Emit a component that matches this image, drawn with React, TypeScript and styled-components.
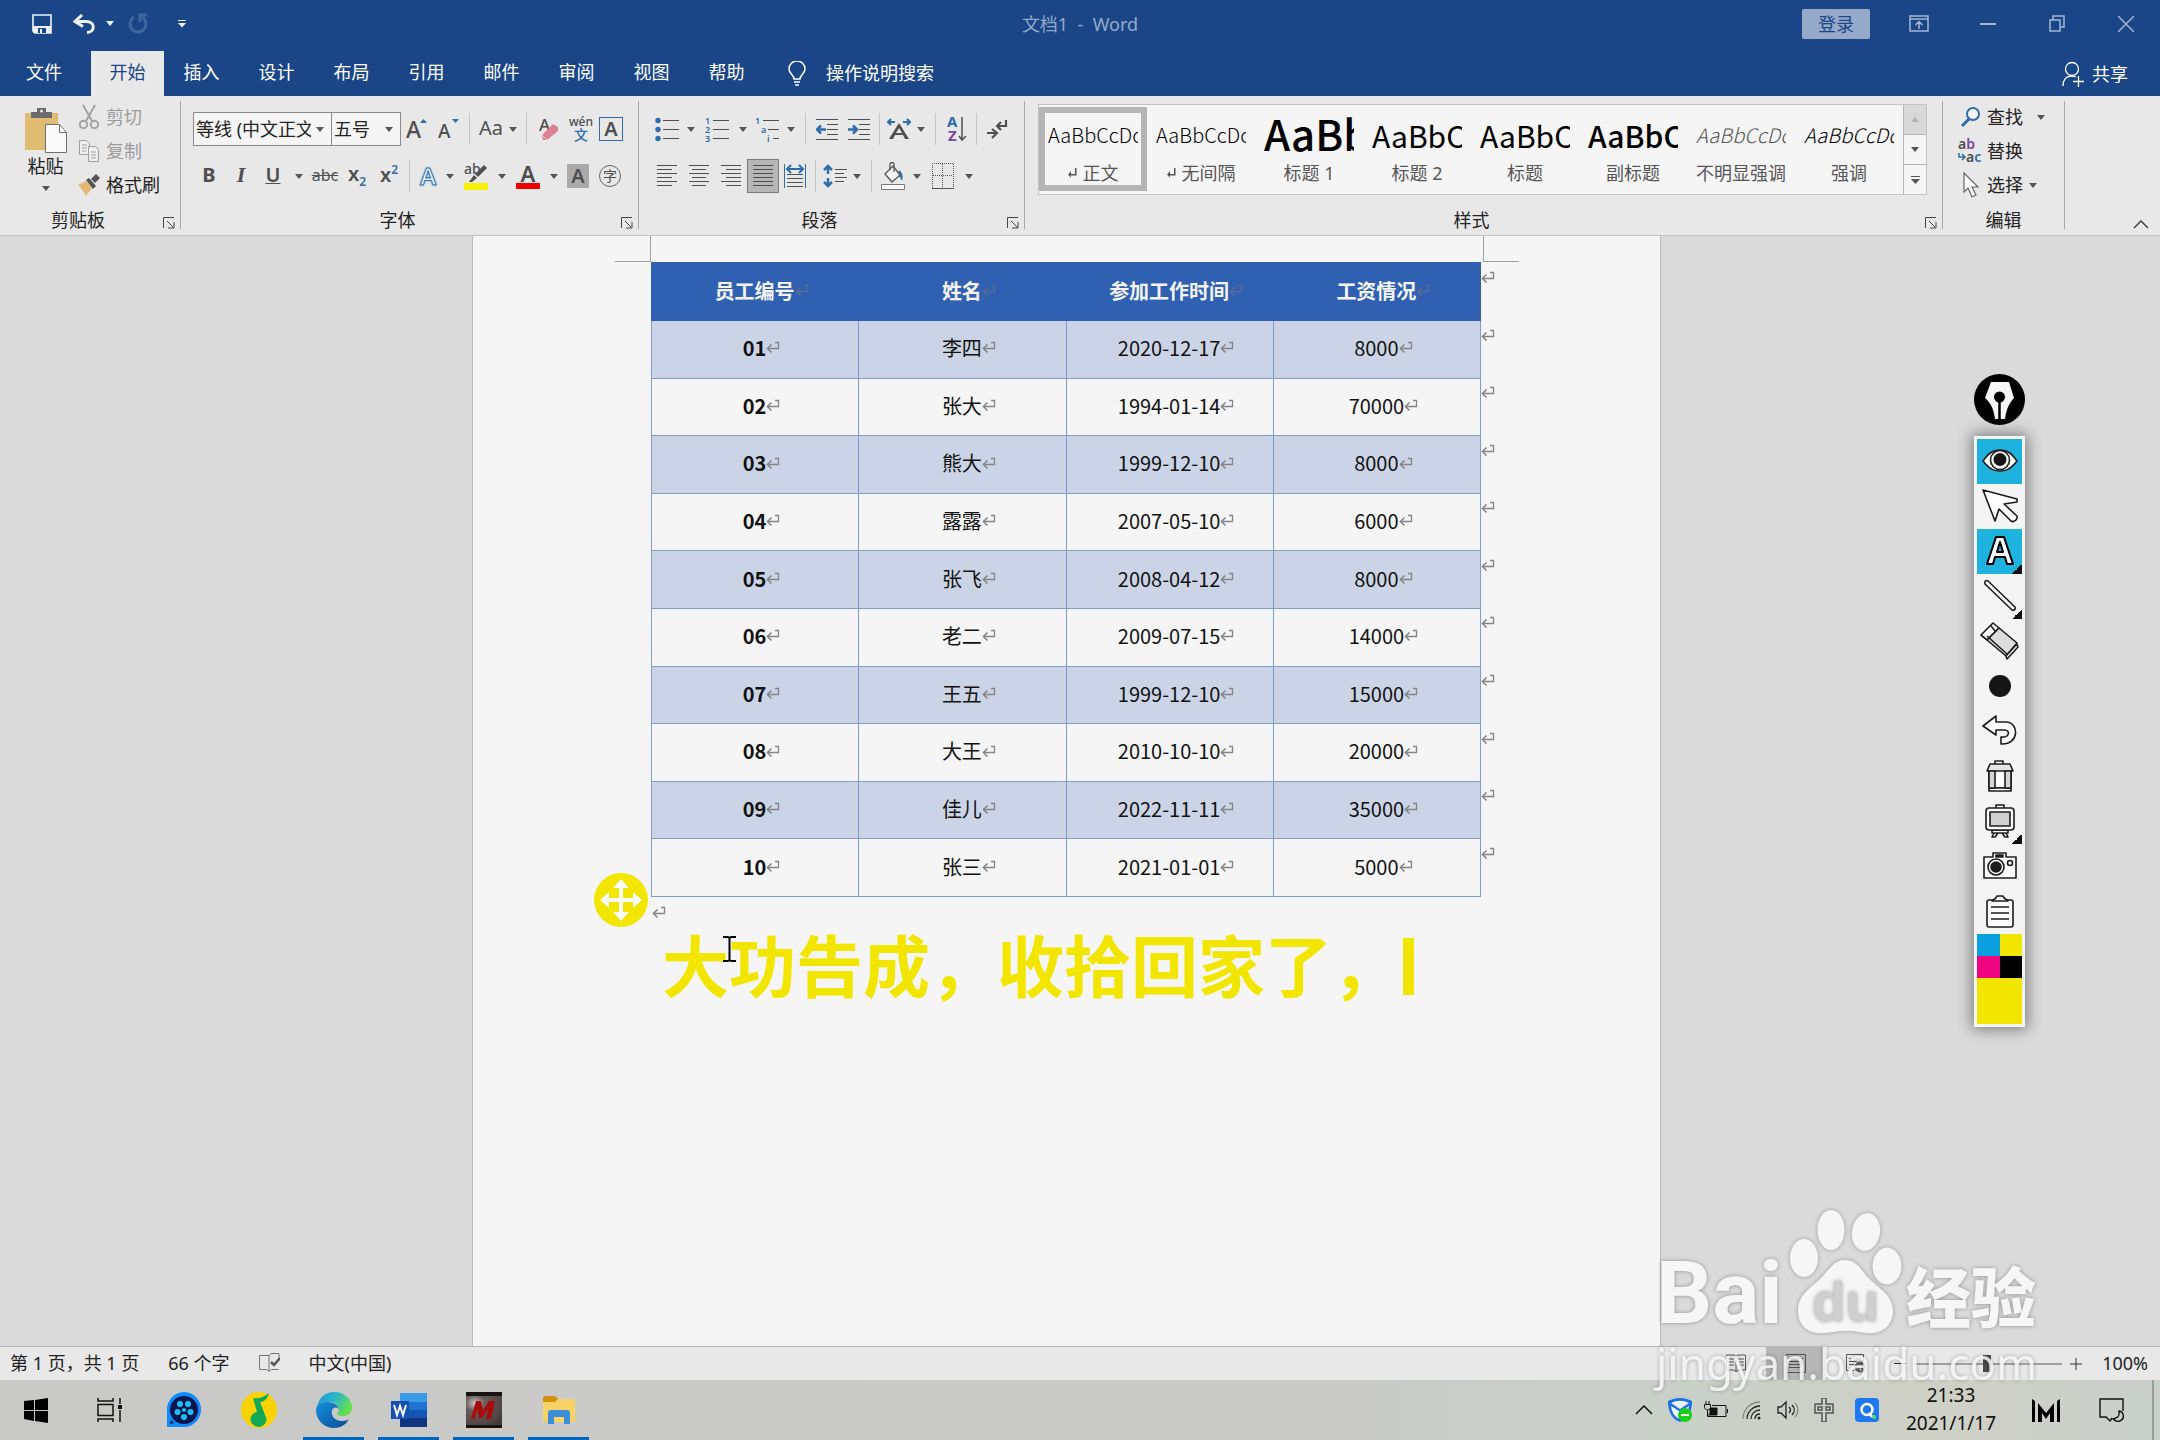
import React from "react";
import styled, { createGlobalStyle, css } from "styled-components";

const ui = `"Noto Sans", "Noto Sans CJK SC", sans-serif`;
const cjk = `"Noto Sans CJK SC", sans-serif`;
const navy = "#1a4688";
const blue = "#2e6cab";
const ink = "#4f4f4f";

const Global = createGlobalStyle`
  *, *::before, *::after { box-sizing: border-box; }
  body { margin: 0; font-family: ${ui}; font-size: 18px; color: #222; background: #dadada; }
  button, input, select { font: inherit; color: inherit; margin: 0; }
  button { border: 0; background: none; padding: 0; white-space: nowrap; }
  svg { display: block; flex: none; }
`;

const Screen = styled.div`
  position: relative;
  display: flex;
  flex-direction: column;
  min-height: 100vh;
  overflow: hidden;
`;

/* ---------- title bar and tabs ---------- */
const TitleBar = styled.header`
  display: grid;
  grid-template-columns: 1fr auto 1fr;
  align-items: center;
  height: 51px;
  padding: 0 0 4px;
  background: ${navy};
  color: #94a9c8;
`;
const QuickBar = styled.div`
  display: flex;
  align-items: center;
  height: 100%;
  padding-left: 22px;
`;
const QuickButton = styled.button<{ $w: number }>`
  display: flex;
  align-items: center;
  justify-content: center;
  width: ${(p) => p.$w}px;
  height: 36px;
`;
const DocTitle = styled.h1`
  margin: 0;
  font-size: 18px;
  font-weight: 400;
  line-height: 24px;
  white-space: pre;
`;
const WindowBar = styled.div`
  display: flex;
  align-items: center;
  justify-content: flex-end;
`;
const SignIn = styled.button`
  width: 68px;
  height: 30px;
  margin-right: 14px;
  border-radius: 2px;
  background: #94aac8;
  color: ${navy};
  line-height: 28px;
`;
const WindowButton = styled.button`
  display: flex;
  align-items: center;
  justify-content: center;
  width: 69px;
  height: 36px;
`;
const TabBar = styled.nav`
  display: flex;
  align-items: stretch;
  height: 45px;
  background: ${navy};
  color: #fff;
`;
const Tab = styled.button<{ $active?: boolean; $file?: boolean }>`
  width: ${(p) => (p.$file ? 91 : p.$active ? 73 : 75)}px;
  padding-right: ${(p) => (p.$file ? 3 : 0)}px;
  line-height: 42px;
  padding-bottom: 3px;
  background: ${(p) => (p.$active ? "#e8e8e8" : "transparent")};
  color: ${(p) => (p.$active ? navy : "#fff")};
`;
const Search = styled.label`
  display: flex;
  align-items: center;
  gap: 20px;
  margin-left: 24px;
  input {
    width: 220px;
    padding: 0 0 2px;
    border: 0;
    background: transparent;
    outline: 0;
  }
  input::placeholder { color: #fff; opacity: 1; }
`;
const Share = styled.button`
  display: flex;
  align-items: center;
  gap: 8px;
  margin-left: auto;
  padding-right: 32px;
  line-height: 24px;
`;

/* ---------- ribbon ---------- */
const Ribbon = styled.section`
  display: flex;
  height: 140px;
  padding: 5px 0 6px;
  background: #e8e8e8;
  border-bottom: 1px solid #c3c3c3;
`;
const Group = styled.div<{ $w: number; $grow?: boolean }>`
  display: flex;
  flex-direction: column;
  width: ${(p) => p.$w}px;
  ${(p) => p.$grow && css`flex: 1 1 auto;`}
  height: 128px;
  border-right: 1px solid #a8a8a8;
`;
const GroupBody = styled.div<{ $pad?: string }>`
  flex: 1;
  min-height: 0;
  padding: ${(p) => p.$pad || "0"};
`;
const GroupFoot = styled.div`
  display: flex;
  align-items: center;
  height: 18px;
  line-height: 20px;
  span { flex: 1; text-align: center; }
`;
const Launcher = styled.button`
  width: 24px;
  height: 18px;
  padding: 6px 0 0 7px;
`;
const ClipBody = styled.div`
  display: flex;
  height: 100%;
`;
const PasteButton = styled.button`
  display: flex;
  flex-direction: column;
  align-items: center;
  width: 77px;
  padding: 6px 0 0 14px;
  line-height: 20px;
  svg + span { margin: 3px 0 10px; }
`;
const Stack = styled.div`
  display: flex;
  flex-direction: column;
`;
const LineButton = styled.button<{ $off?: boolean }>`
  display: flex;
  align-items: center;
  height: 34px;
  padding-bottom: 2px;
  line-height: 24px;
  color: ${(p) => (p.$off ? "#9c9c9c" : "#222")};
  > svg:first-child { width: 24px; margin-right: 5px; }
`;
const ArrowGap = styled.span<{ $wide?: boolean }>`
  margin-left: ${(p) => (p.$wide ? 14 : 6)}px;
`;
const ToolRow = styled.div`
  display: flex;
  align-items: center;
  height: 34px;
  & + & { margin-top: 13px; }
`;
const Tool = styled.button<{ $w?: number; $on?: boolean }>`
  display: flex;
  align-items: center;
  justify-content: center;
  gap: 6px;
  width: ${(p) => p.$w || 32}px;
  height: 34px;
  color: ${ink};
  ${(p) => p.$on && css`background: #b6b6b6; border: 1px solid #7c7c7c;`}
`;
const Sep = styled.i<{ $w: number }>`
  width: 1px;
  height: 32px;
  margin: 0 ${(p) => Math.floor((p.$w - 1) / 2)}px 0 ${(p) => Math.ceil((p.$w - 1) / 2)}px;
  background: #c6c6c6;
`;
const Glyph = styled.span<{ $size?: number; $weight?: number; $italic?: boolean; $line?: string; $serif?: boolean }>`
  margin-bottom: 2px;
  font-family: ${(p) => (p.$serif ? `"Liberation Serif", serif` : ui)};
  font-size: ${(p) => p.$size || 20}px;
  font-weight: ${(p) => p.$weight || 400};
  font-style: ${(p) => (p.$italic ? "italic" : "normal")};
  text-decoration: ${(p) => p.$line || "none"};
  text-decoration-thickness: 1px;
  line-height: 24px;
  sub, sup { font-size: 12px; line-height: 1; color: ${blue}; }
`;
const OutlineA = styled.span`
  font-size: 24px;
  font-weight: 600;
  line-height: 28px;
  color: #eef4fb;
  -webkit-text-stroke: 1px ${blue};
  text-shadow: 0 0 3px #7fb0e6;
`;
const BoxedA = styled.span<{ $filled?: boolean }>`
  width: ${(p) => (p.$filled ? 22 : 24)}px;
  height: 24px;
  font-size: 20px;
  font-weight: 600;
  line-height: 22px;
  border: 1px solid ${(p) => (p.$filled ? "#aaa" : blue)};
  background: ${(p) => (p.$filled ? "#aaa" : "transparent")};
`;
const Circled = styled.span`
  width: 22px;
  height: 22px;
  border: 1px solid #666;
  border-radius: 50%;
  font-size: 14px;
  line-height: 19px;
`;
const Underbar = styled.span<{ $c: string }>`
  display: flex;
  justify-content: center;
  width: 24px;
  height: 26px;
  font-size: 22px;
  font-weight: 600;
  line-height: 20px;
  border-bottom: 6px solid ${(p) => p.$c};
`;
const Pinyin = styled.span`
  display: flex;
  flex-direction: column;
  align-items: center;
  font-size: 12px;
  font-weight: 500;
  line-height: 11px;
  b { font-size: 14px; font-weight: 500; line-height: 15px; color: ${blue}; }
`;
const Combo = styled.span<{ $w: number }>`
  display: grid;
  align-items: center;
  width: ${(p) => p.$w}px;
  height: 34px;
  background: #f5f5f5;
  border: 1px solid #8a8a8a;
  & + & { border-left-width: 0; }
  select {
    grid-area: 1 / 1;
    width: 100%;
    height: 32px;
    padding: 0 20px 0 2px;
    appearance: none;
    border: 0;
    background: transparent;
    outline: 0;
    overflow: hidden;
  }
  svg { grid-area: 1 / 1; justify-self: end; margin-right: 7px; pointer-events: none; }
`;
const Gallery = styled.div`
  display: flex;
  height: 91px;
  background: #f5f5f5;
  border: 1px solid #c3c3c3;
`;
const StyleCard = styled.button<{ $on?: boolean }>`
  display: flex;
  flex-direction: column;
  flex: 1 1 108px;
  min-width: 0;
  height: 84px;
  margin-top: 2px;
  padding: ${(p) => (p.$on ? "0 3px" : "6px 9px")};
  border: ${(p) => (p.$on ? "6px solid #b5b5b5" : "0")};
  color: #555;
`;
const Preview = styled.span<{ $size: number; $bold?: boolean; $italic?: boolean; $soft?: boolean }>`
  width: 100%;
  height: 48px;
  overflow: hidden;
  text-align: left;
  font-family: ${cjk};
  font-size: ${(p) => p.$size}px;
  font-weight: ${(p) => (p.$bold ? 500 : p.$size < 24 ? 300 : 400)};
  font-style: ${(p) => (p.$italic ? "italic" : "normal")};
  line-height: ${(p) => (p.$size > 40 ? 40 : 44)}px;
  color: ${(p) => (p.$soft ? "#555" : "#000")};
`;
const CardName = styled.span`
  display: flex;
  align-items: center;
  justify-content: center;
  gap: 6px;
  width: 100%;
  line-height: 24px;
`;
const GalleryScroll = styled.div`
  display: flex;
  flex-direction: column;
  width: 23px;
  border-left: 1px solid #b5b5b5;
  button {
    display: flex;
    flex: 1;
    align-items: center;
    justify-content: center;
  }
  button + button { border-top: 1px solid #b5b5b5; }
  button:first-child { background: #d8d8d8; }
`;
const RibbonEnd = styled.div`
  display: flex;
  align-items: flex-end;
  justify-content: flex-end;
  width: 95px;
  padding-right: 11px;
`;

/* ---------- document ---------- */
const Workspace = styled.main`
  display: flex;
  flex: 1;
  justify-content: center;
  padding-right: 27px;
  background: #dadada;
`;
const Page = styled.article`
  position: relative;
  width: 1189px;
  background: #f5f5f5;
  border: solid #bcbcbc;
  border-width: 0 1px;
`;
const MarginRow = styled.div`
  display: flex;
  justify-content: space-between;
  height: 26px;
  padding: 0 141px 0 142px;
`;
const Corner = styled.i<{ $right?: boolean }>`
  width: 36px;
  border-bottom: 1px solid #a0a0a0;
  ${(p) => (p.$right ? "border-left" : "border-right")}: 1px solid #a0a0a0;
`;
const Staff = styled.table`
  width: 846px;
  height: 635px;
  margin-left: 178px;
  table-layout: fixed;
  border-collapse: collapse;
  font-family: ${cjk};
  font-size: 20px;
  line-height: 28px;
  color: #111;
  text-align: center;
  col:last-child { width: 16px; }
  th, td { padding: 0 0 2px; border: 1px solid #7f9cc8; }
  thead th { height: 58px; background: #3060b2; color: #f5f5f5; border-color: #3060b2; font-weight: 700; }
  tbody tr:nth-child(odd) > :not(:last-child) { background: #cbd4e6; }
  tbody th { font-weight: 700; }
  th svg, td svg { margin: 0 -13px 6px 0; }
`;
const RowEnd = styled.td`
  && { border: 0; padding: 8px 0 0; vertical-align: top; text-align: left; line-height: 10px; }
`;
const MarkSvg = styled.svg`
  display: inline-block;
  vertical-align: middle;
`;
const Tail = styled.p`
  margin: 0;
  padding: 3px 0 0 179px;
  line-height: 20px;
`;
const Annotation = styled.div`
  position: absolute;
  top: 679px;
  left: 189px;
  display: flex;
  align-items: center;
  font-family: ${cjk};
  font-size: 67px;
  font-weight: 700;
  line-height: 96px;
  color: #f2e600;
  white-space: nowrap;
`;
const Caret = styled.i`
  width: 11px;
  height: 57px;
  margin: 6px 0 0 4px;
  background: #f2e600;
`;
const MoveHandle = styled.button`
  position: absolute;
  top: 637px;
  left: 121px;
`;
const Pointer = styled.svg`
  position: absolute;
  top: 700px;
  left: 249px;
`;

/* ---------- pen palette ---------- */
const Palette = styled.aside`
  position: absolute;
  top: 374px;
  right: 135px;
  display: flex;
  flex-direction: column;
  gap: 11px;
  width: 51px;
`;
const PaletteBox = styled.div`
  display: flex;
  flex-direction: column;
  padding: 3px;
  background: #f4f4f4;
  box-shadow: 0 0 14px 2px rgba(0, 0, 0, 0.45);
`;
const PenTool = styled.button<{ $on?: boolean; $more?: boolean }>`
  display: flex;
  align-items: center;
  justify-content: center;
  height: 45px;
  padding-bottom: 2px;
  background-color: ${(p) => (p.$on ? "#1eb2df" : "transparent")};
  ${(p) =>
    p.$more &&
    css`
      background-image: linear-gradient(135deg, transparent 50%, #111 50%);
      background-size: 10px 10px;
      background-position: right bottom;
      background-repeat: no-repeat;
    `}
`;
const Swatches = styled.div`
  display: grid;
  grid-template-columns: 1fr 1fr;
`;
const Swatch = styled.button<{ $c: string; $wide?: boolean }>`
  grid-column: ${(p) => (p.$wide ? "span 2" : "auto")};
  height: ${(p) => (p.$wide ? 46 : 22)}px;
  background: ${(p) => p.$c};
`;

/* ---------- status bar ---------- */
const StatusBar = styled.footer`
  display: flex;
  align-items: center;
  height: 34px;
  padding: 0 12px 0 10px;
  background: #e8e8e8;
  border-top: 1px solid #b8b8b8;
  line-height: 32px;
  white-space: pre;
`;
const StatusLeft = styled.div`
  display: flex;
  align-items: center;
  gap: 29px;
  padding-bottom: 2px;
`;
const StatusRight = styled.div`
  display: flex;
  align-items: center;
  height: 100%;
  margin-left: auto;
`;
const ViewButton = styled.button<{ $on?: boolean }>`
  display: flex;
  align-items: center;
  justify-content: center;
  width: 60px;
  height: 33px;
  background: ${(p) => (p.$on ? "#b6b6b6" : "transparent")};
`;
const Step = styled.button`
  display: flex;
  align-items: center;
  justify-content: center;
  width: 28px;
  height: 33px;
`;
const Zoom = styled.input`
  width: 148px;
  height: 18px;
  appearance: none;
  background: linear-gradient(#a0a0a0, #a0a0a0) center / 100% 2px no-repeat;
  &::-webkit-slider-thumb { appearance: none; width: 8px; height: 17px; background: #4a4a4a; }
`;
const Percent = styled.span`
  margin-left: 12px;
  padding-bottom: 2px;
`;

/* ---------- task bar ---------- */
const TaskBar = styled.footer`
  display: flex;
  align-items: center;
  height: 60px;
  padding-right: 6px;
  background: linear-gradient(90deg, #c9c9c8 0%, #cacac8 60%, #c9d0c8 78%, #cfd0c6 90%, #c9cfcb 100%);
  color: #111;
`;
const TaskButton = styled.button<{ $w?: number; $open?: boolean }>`
  display: flex;
  align-items: center;
  justify-content: center;
  width: ${(p) => p.$w || 75}px;
  height: 60px;
  ${(p) => p.$open && css`background: linear-gradient(#0067c0, #0067c0) center bottom / 61px 3px no-repeat;`}
`;
const Tray = styled.div`
  display: flex;
  align-items: center;
  margin-left: auto;
  border-right: 2px solid #9a9c98;
  height: 60px;
`;
const TrayButton = styled.button<{ $w?: number }>`
  display: flex;
  align-items: center;
  justify-content: center;
  width: ${(p) => p.$w || 36}px;
  height: 60px;
`;
const Clock = styled.time`
  width: 118px;
  margin-right: 12px;
  padding-bottom: 2px;
  text-align: center;
  font-size: 19px;
  line-height: 28px;
  white-space: pre-line;
`;

/* ---------- watermark ---------- */
const Watermark = styled.div`
  position: absolute;
  right: 116px;
  bottom: 48px;
  width: 388px;
  color: #f6f6f6;
  text-shadow: 0 0 4px rgba(0, 0, 0, 0.35);
  pointer-events: none;
`;
const MarkRow = styled.div`
  display: flex;
  align-items: flex-end;
  height: 132px;
`;
const MarkBai = styled.span`
  width: 132px;
  font-family: Roboto, sans-serif;
  font-size: 88px;
  font-weight: 700;
  line-height: 86px;
`;
const Paw = styled.svg`
  overflow: visible;
  filter: drop-shadow(0 0 2px rgba(0, 0, 0, 0.3));
`;
const MarkCn = styled.span`
  margin-left: 6px;
  font-family: ${cjk};
  font-size: 65px;
  font-weight: 900;
  line-height: 84px;
  white-space: nowrap;
`;
const MarkUrl = styled.div`
  margin-top: -2px;
  font-size: 44px;
  line-height: 58px;
  opacity: 0.85;
  white-space: nowrap;
`;

/* ---------- small drawings ---------- */
const Arrow = ({ color = "#555" }: { color?: string }) => (
  <svg width="8" height="5" viewBox="0 0 8 5"><path d="M0 0h8L4 5z" fill={color} /></svg>
);
const Drop = ({ w = 16, label }: { w?: number; label: string }) => (
  <Tool $w={w} aria-label={label}><Arrow /></Tool>
);
const Mark = ({ color = "#858585" }: { color?: string }) => (
  <MarkSvg width="14" height="13" viewBox="0 0 14 13" fill="none" stroke={color} aria-hidden="true">
    <path d="M9 1.500h3.500v6H1.500" strokeWidth="1.300" /><path d="M5.500 3.500l-4 4 4 4" strokeWidth="1.600" />
  </MarkSvg>
);
const Small = () => (
  <svg width="9" height="10" viewBox="0 0 9 10"><path d="M7 0v6H3V3L0 6.500l3 3V7.500h5.500V0z" fill="#555" /></svg>
);
const LaunchIcon = () => (
  <svg width="12" height="12" viewBox="0 0 12 12" fill="none" stroke="#444"><path d="M.5 11V.5H11M4 4l6 6M11 5v6H5" /></svg>
);
const Lines = ({ rows }: { rows: [number, number][] }) => (
  <svg width="20" height="22" viewBox="0 0 20 22" stroke={ink}>
    {rows.map(([a, b], i) => <path key={i} d={`M${a} ${i * 4 + 0.5}H${b}`} />)}
  </svg>
);
const full: [number, number] = [0, 20];

const ListIcon = ({ kind }: { kind: "dot" | "num" | "multi" }) => (
  <svg width="24" height="26" viewBox="0 0 24 26" stroke={ink} fontSize="9" fontFamily="Noto Sans" fontWeight="600">
    {kind === "multi" ? <path d="M8 4.500h16M13 13.500h11M18 22.500h6" /> : <path d="M8 4.500h16M8 13.500h16M8 22.500h16" />}
    {kind === "dot" && <g fill={blue} stroke="none"><circle cx="3" cy="4.500" r="2.700" /><circle cx="3" cy="13.500" r="2.700" /><circle cx="3" cy="22.500" r="2.700" /></g>}
    {kind === "num" && <g fill={blue} stroke="none"><text x="0" y="8">1</text><text x="0" y="17">2</text><text x="0" y="26">3</text></g>}
    {kind === "multi" && <g fill={blue} stroke="none"><text x="0" y="8">1</text><text x="6" y="17">a</text><text x="12" y="26">i</text></g>}
  </svg>
);
const IndentIcon = ({ out }: { out?: boolean }) => (
  <svg width="22" height="22" viewBox="0 0 22 22" stroke={ink}>
    <path d="M0 1.500h22M11 6.500h11M11 11.500h11M11 16.500h11M0 21.500h22" />
    <path d={out ? "M10 11.500H1M5 7.500L1 11.500l4 4" : "M0 11.500h9M5 7.500l4 4-4 4"} stroke={blue} strokeWidth="2.500" fill="none" />
  </svg>
);

const people: [string, string, string, string][] = [
  ["01", "李四", "2020-12-17", "8000"],
  ["02", "张大", "1994-01-14", "70000"],
  ["03", "熊大", "1999-12-10", "8000"],
  ["04", "露露", "2007-05-10", "6000"],
  ["05", "张飞", "2008-04-12", "8000"],
  ["06", "老二", "2009-07-15", "14000"],
  ["07", "王五", "1999-12-10", "15000"],
  ["08", "大王", "2010-10-10", "20000"],
  ["09", "佳儿", "2022-11-11", "35000"],
  ["10", "张三", "2021-01-01", "5000"],
];
const heads = ["员工编号", "姓名", "参加工作时间", "工资情况"];
const tabs = ["插入", "设计", "布局", "引用", "邮件", "审阅", "视图", "帮助"];
const styles = [
  { name: "正文", text: "AaBbCcDc", size: 20, on: true, mark: true },
  { name: "无间隔", text: "AaBbCcDc", size: 20, mark: true },
  { name: "标题 1", text: "AaBb", size: 42, bold: true },
  { name: "标题 2", text: "AaBbC", size: 30 },
  { name: "标题", text: "AaBbC", size: 30 },
  { name: "副标题", text: "AaBbC", size: 30, bold: true },
  { name: "不明显强调", text: "AaBbCcDc", size: 20, italic: true, soft: true },
  { name: "强调", text: "AaBbCcDc", size: 20, italic: true },
];

const Foot = ({ name, plain }: { name: string; plain?: boolean }) => (
  <GroupFoot>
    <span>{name}</span>
    {!plain && <Launcher aria-label={`${name}设置`}><LaunchIcon /></Launcher>}
  </GroupFoot>
);

const Title = () => (
  <TitleBar>
    <QuickBar>
      <QuickButton $w={40} aria-label="保存">
        <svg width="20" height="20" viewBox="0 0 20 20"><path d="M1 1h18v18H3l-2-2z" fill="none" stroke="#f0f4fa" strokeWidth="1.600" /><path d="M1 12h18v7H1z" fill="#f0f4fa" /><path d="M6 14h8v5H6z" fill={navy} /><path d="M8 15h2v4H8z" fill="#f0f4fa" /></svg>
      </QuickButton>
      <QuickButton $w={44} aria-label="撤消">
        <svg width="23" height="20" viewBox="0 0 23 20" fill="none" stroke="#f0f4fa" strokeWidth="3"><path d="M9 1L2 7.500l8 5M3 7.500h10c10 0 9 11 1 11" /></svg>
      </QuickButton>
      <QuickButton $w={8} aria-label="撤消列表"><Arrow color="#f0f4fa" /></QuickButton>
      <QuickButton $w={48} aria-label="重复">
        <svg width="22" height="22" viewBox="0 0 22 22" fill="none" stroke="#3e659e" strokeWidth="3"><path d="M7 4a8 8 0 1 0 8 0M13 9V2h7" /></svg>
      </QuickButton>
      <QuickButton $w={40} aria-label="自定义">
        <svg width="8" height="8" viewBox="0 0 8 8" fill="#f0f4fa"><path d="M0 0h8v1H0zM0 3h8L4 7.500z" /></svg>
      </QuickButton>
    </QuickBar>
    <DocTitle>{"文档1  -  Word"}</DocTitle>
    <WindowBar>
      <SignIn>登录</SignIn>
      <WindowButton aria-label="功能区显示选项">
        <svg width="20" height="17" viewBox="0 0 20 17" fill="none" stroke="#a5b7d2" strokeWidth="1.500"><path d="M1 1h18v15H1zM1 4h18M10 14V7M6.500 10L10 6.500l3.500 3.500" /></svg>
      </WindowButton>
      <WindowButton aria-label="最小化"><svg width="16" height="2"><path d="M0 1h16" stroke="#a5b7d2" strokeWidth="2" /></svg></WindowButton>
      <WindowButton aria-label="还原">
        <svg width="16" height="17" viewBox="0 0 16 17" fill="none" stroke="#a5b7d2" strokeWidth="1.500"><path d="M1 5h10v11H1zM4 5V1h11v11h-4" /></svg>
      </WindowButton>
      <WindowButton aria-label="关闭">
        <svg width="16" height="16" viewBox="0 0 16 16" stroke="#a5b7d2" strokeWidth="1.500"><path d="M0 0l16 16M16 0L0 16" /></svg>
      </WindowButton>
    </WindowBar>
  </TitleBar>
);

const Tabs = () => (
  <TabBar>
    <Tab $file>文件</Tab>
    <Tab $active>开始</Tab>
    {tabs.map((t) => <Tab key={t}>{t}</Tab>)}
    <Search>
      <svg width="18" height="25" viewBox="0 0 18 25" fill="none" stroke="#fff" strokeWidth="1.500"><path d="M6 18c0-4-5-5-5-10a8 8 0 0 1 16 0c0 5-5 6-5 10zM6 21h6M7 24h4" /></svg>
      <input type="text" placeholder="操作说明搜索" aria-label="操作说明搜索" />
    </Search>
    <Share>
      <svg width="22" height="26" viewBox="0 0 22 26" fill="none" stroke="#fff" strokeWidth="1.300"><circle cx="10" cy="8" r="6.500" /><path d="M1 25c0-6 3-10 9-10 2 0 3 .5 4 1M16.500 15v11M11 20.500h11" /></svg>
      共享
    </Share>
  </TabBar>
);

const Clipboard = () => (
  <Group $w={181}>
    <GroupBody>
      <ClipBody>
        <PasteButton>
          <svg width="42" height="46" viewBox="0 0 42 46"><path d="M0 6h33v37H0z" fill="#e0bc72" /><path d="M6 5h6V1h9v4h6v6H6z" fill="#6b6b6b" /><circle cx="16.500" cy="4" r="1.500" fill="#e8e8e8" /><path d="M20.500 17.500h14l7 8v20h-21z" fill="#fafafa" stroke="#707070" /><path d="M34.500 17.500v8h7" fill="none" stroke="#707070" /></svg>
          <span>粘贴</span>
          <Arrow />
        </PasteButton>
        <Stack>
          <LineButton $off>
            <svg width="20" height="26" viewBox="0 0 20 26" fill="none" stroke="#a3a3a3" strokeWidth="2"><path d="M4 1l9 16M16 1L7 17" /><circle cx="4.500" cy="20.500" r="3.700" /><circle cx="15.500" cy="20.500" r="3.700" /></svg>
            剪切
          </LineButton>
          <LineButton $off>
            <svg width="20" height="22" viewBox="0 0 20 22" fill="#eee" stroke="#a0a0a0"><path d="M.5.5h7l3 3v11h-10zM3 5h5M3 8h5M3 11h4" /><path d="M9.500 6.500h7l3 3v12h-10zM12 12h5M12 15h5M12 18h5" /></svg>
            复制
          </LineButton>
          <LineButton>
            <svg width="22" height="22" viewBox="0 0 22 22"><path d="M0 11l8-4 6 7-6 8c-2-4-5-8-8-11z" fill="#e3b873" /><path d="M8 6l3-2 7 8-3 3z" fill="#555" /><path d="M13 5l5-5 4 4-5 5z" fill="#555" /></svg>
            格式刷
          </LineButton>
        </Stack>
      </ClipBody>
    </GroupBody>
    <Foot name="剪贴板" />
  </Group>
);

const FontGroup = () => (
  <Group $w={458}>
    <GroupBody $pad="11px 0 0 12px">
      <ToolRow>
        <Combo $w={139}><select aria-label="字体"><option>等线 (中文正文)</option></select><Arrow /></Combo>
        <Combo $w={69}><select aria-label="字号"><option>五号</option></select><Arrow /></Combo>
        <Tool aria-label="增大字号"><svg width="22" height="24" viewBox="0 0 22 24"><text x="0" y="21" fontSize="23" fontWeight="500" fontFamily="Noto Sans" fill={ink}>A</text><path d="M14 6h7l-3.500-4z" fill={blue} /></svg></Tool>
        <Tool aria-label="减小字号"><svg width="22" height="24" viewBox="0 0 22 24"><text x="0" y="21" fontSize="19" fontWeight="500" fontFamily="Noto Sans" fill={ink}>A</text><path d="M14 2h7l-3.500 4z" fill={blue} /></svg></Tool>
        <Sep $w={9} />
        <Tool $w={48} aria-label="更改大小写"><Glyph>Aa</Glyph><Arrow /></Tool>
        <Sep $w={9} />
        <Tool $w={36} aria-label="清除格式"><svg width="20" height="24" viewBox="0 0 20 24"><text x="0" y="14" fontSize="17" fontWeight="500" fontFamily="Noto Sans" fill={ink}>A</text><path d="M3 18L14 7l5 3v4L8 23H4z" fill="#dd8093" /><path d="M3 18l5 5" stroke="#f5d6dc" /></svg></Tool>
        <Tool $w={28} aria-label="拼音指南"><Pinyin>wén<b>文</b></Pinyin></Tool>
        <Tool aria-label="字符边框"><BoxedA>A</BoxedA></Tool>
      </ToolRow>
      <ToolRow>
        <Tool aria-label="加粗"><Glyph $weight={700}>B</Glyph></Tool>
        <Tool aria-label="倾斜"><Glyph $italic $serif $weight={700} $size={22}>I</Glyph></Tool>
        <Tool aria-label="下划线"><Glyph $weight={600} $line="underline">U</Glyph></Tool>
        <Drop w={20} label="下划线样式" />
        <Tool aria-label="删除线"><Glyph $size={16} $line="line-through">abc</Glyph></Tool>
        <Tool aria-label="下标"><Glyph $weight={600}>x<sub>2</sub></Glyph></Tool>
        <Tool aria-label="上标"><Glyph $weight={600}>x<sup>2</sup></Glyph></Tool>
        <Sep $w={9} />
        <Tool $w={28} aria-label="文本效果"><OutlineA>A</OutlineA></Tool>
        <Drop label="文本效果列表" />
        <Tool $w={36} aria-label="突出显示"><svg width="24" height="28" viewBox="0 0 24 28"><text x="0" y="12" fontSize="14" fontFamily="Noto Sans" fontWeight="500" fill={ink}>ab</text><path d="M20 3l3 3-9 9-3-3z" fill={ink} /><path d="M10 13l3 3-5 4H5z" fill={ink} /><path d="M0 21h24v7H0z" fill="#f5f000" /></svg></Tool>
        <Drop label="突出显示颜色" />
        <Tool $w={36} aria-label="字体颜色"><Underbar $c="#f00000">A</Underbar></Tool>
        <Drop label="字体颜色列表" />
        <Tool aria-label="字符底纹"><BoxedA $filled>A</BoxedA></Tool>
        <Tool aria-label="带圈字符"><Circled>字</Circled></Tool>
      </ToolRow>
    </GroupBody>
    <Foot name="字体" />
  </Group>
);

const ParagraphGroup = () => (
  <Group $w={386}>
    <GroupBody $pad="11px 0 0 12px">
      <ToolRow>
        <Tool aria-label="项目符号"><ListIcon kind="dot" /></Tool><Drop label="项目符号库" />
        <Tool $w={36} aria-label="编号"><ListIcon kind="num" /></Tool><Drop label="编号库" />
        <Tool aria-label="多级列表"><ListIcon kind="multi" /></Tool><Drop label="列表库" />
        <Sep $w={12} />
        <Tool aria-label="减少缩进量"><IndentIcon out /></Tool>
        <Tool aria-label="增加缩进量"><IndentIcon /></Tool>
        <Sep $w={8} />
        <Tool aria-label="中文版式"><svg width="24" height="24" viewBox="0 0 24 24"><path d="M12 6L2 22h4l2-4h8l2 4h4zm0 5l3 5H9z" fill={ink} /><path d="M8 5H1M4 2L1 5l3 3M16 5h7M20 2l3 3-3 3" stroke={blue} strokeWidth="2" fill="none" /></svg></Tool>
        <Drop w={12} label="中文版式列表" />
        <Sep $w={16} />
        <Tool $w={28} aria-label="排序"><svg width="20" height="28" viewBox="0 0 20 28" fontFamily="Noto Sans" fontWeight="700" fontSize="15"><text x="0" y="12" fill={blue}>A</text><text x="1" y="26" fill="#7b459a">Z</text><path d="M15 2v23M12 21l3 4 4-4" fill="none" stroke={ink} strokeWidth="1.500" /></svg></Tool>
        <Sep $w={10} />
        <Tool aria-label="显示编辑标记"><svg width="21" height="20" viewBox="0 0 21 20" fill="none" stroke={ink} strokeWidth="2.200"><path d="M19 1v6h-8M14 3l-4 4 4 4M0 14h8M5 10l5 4-5 5" /></svg></Tool>
      </ToolRow>
      <ToolRow>
        <Tool aria-label="左对齐"><Lines rows={[full, [0, 15], full, [0, 15], full, [0, 15]]} /></Tool>
        <Tool aria-label="居中"><Lines rows={[full, [3, 17], full, [3, 17], full, [3, 17]]} /></Tool>
        <Tool aria-label="右对齐"><Lines rows={[full, [5, 20], full, [5, 20], full, [5, 20]]} /></Tool>
        <Tool $on aria-label="两端对齐" aria-pressed="true"><Lines rows={[full, full, full, full, full, full]} /></Tool>
        <Tool aria-label="分散对齐"><svg width="22" height="24" viewBox="0 0 22 24" fill="none"><path d="M.5 0v24M21.500 0v24" stroke={blue} /><path d="M4 5h14M7 1L3 5l4 4M15 1l4 4-4 4" stroke={blue} strokeWidth="2" /><path d="M3 10.500h16M3 14.500h16M3 18.500h16M3 22.500h16" stroke={ink} /></svg></Tool>
        <Sep $w={8} />
        <Tool aria-label="行距"><svg width="24" height="24" viewBox="0 0 24 24" fill="none"><path d="M5 2v8M1 6l4-4 4 4M5 14v8M1 18l4 4 4-4" stroke={blue} strokeWidth="2.500" /><path d="M12 5.500h12M12 9.500h9M12 13.500h12M12 17.500h9" stroke={ink} /></svg></Tool>
        <Drop w={12} label="行距选项" />
        <Sep $w={16} />
        <Tool $w={28} aria-label="底纹"><svg width="24" height="28" viewBox="0 0 24 28"><path d="M18 8c4 3 4 7 3 11l-4-7z" fill={blue} /><path d="M4 12l8-8 7 9-8 7z" fill="#f5f5f5" stroke="#555" strokeWidth="1.300" /><path d="M9 8V2c0-2 4-2 4 0v8" fill="none" stroke="#555" strokeWidth="1.300" /><path d="M.5 22.500h23v5H.5z" fill="#fafafa" stroke="#777" /></svg></Tool>
        <Drop w={20} label="底纹颜色" />
        <Tool aria-label="边框"><svg width="22" height="26" viewBox="0 0 22 26" fill="none" stroke="#555"><path d="M.5 25V.5h21V25M10.500 1v24M1 12.500h20" strokeDasharray="1 1" /><path d="M0 25.500h22" /></svg></Tool>
        <Drop w={20} label="边框列表" />
      </ToolRow>
    </GroupBody>
    <Foot name="段落" />
  </Group>
);

const StyleGroup = () => (
  <Group $w={918} $grow>
    <GroupBody $pad="3px 15px 0 13px">
      <Gallery>
        {styles.map((s) => (
          <StyleCard key={s.name} $on={s.on}>
            <Preview $size={s.size} $bold={s.bold} $italic={s.italic} $soft={s.soft}>{s.text}</Preview>
            <CardName>{s.mark && <Small />}{s.name}</CardName>
          </StyleCard>
        ))}
        <GalleryScroll>
          <button aria-label="上一行"><svg width="8" height="5"><path d="M0 5h8L4 0z" fill="#b0b0b0" /></svg></button>
          <button aria-label="下一行"><Arrow /></button>
          <button aria-label="其他"><svg width="9" height="8"><path d="M0 0h9v1H0zM0 3h9L4.500 8z" fill="#555" /></svg></button>
        </GalleryScroll>
      </Gallery>
    </GroupBody>
    <Foot name="样式" />
  </Group>
);

const EditGroup = () => (
  <Group $w={122}>
    <GroupBody $pad="0 0 0 15px">
      <LineButton>
        <svg width="20" height="20" viewBox="0 0 20 20" fill="none" stroke={blue}><circle cx="13" cy="7" r="6" strokeWidth="2" fill="#f5f5f5" /><path d="M9 12l-7 7" strokeWidth="3" /></svg>
        查找<ArrowGap $wide><Arrow /></ArrowGap>
      </LineButton>
      <LineButton>
        <svg width="24" height="26" viewBox="0 0 24 26" fontFamily="Noto Sans" fontWeight="600" fontSize="14"><text x="0" y="11" fill={ink}>a<tspan fill="#7b459a">b</tspan></text><text x="8" y="24" fill={ink}>a<tspan fill={blue}>c</tspan></text><path d="M1 15v4h5M4 16l3 3-3 3" fill="none" stroke={blue} strokeWidth="1.500" /></svg>
        替换
      </LineButton>
      <LineButton>
        <svg width="22" height="26" viewBox="0 0 22 26" fill="#fafafa" stroke="#666" strokeWidth="1.200"><path d="M5 1v19l4-4 4 9 4-2-4-8h6z" /></svg>
        选择<ArrowGap><Arrow /></ArrowGap>
      </LineButton>
    </GroupBody>
    <Foot name="编辑" plain />
  </Group>
);

const Document = () => (
  <Workspace>
    <Page>
      <MarginRow><Corner /><Corner $right /></MarginRow>
      <Staff>
        <colgroup><col /><col /><col /><col /><col /></colgroup>
        <thead>
          <tr>
            {heads.map((h) => <th key={h} scope="col">{h}<Mark color="#5a6b94" /></th>)}
            <RowEnd><Mark /></RowEnd>
          </tr>
        </thead>
        <tbody>
          {people.map(([id, name, date, pay]) => (
            <tr key={id}>
              <th scope="row">{id}<Mark /></th>
              <td>{name}<Mark /></td>
              <td>{date}<Mark /></td>
              <td>{pay}<Mark /></td>
              <RowEnd><Mark /></RowEnd>
            </tr>
          ))}
        </tbody>
      </Staff>
      <Tail><Mark /></Tail>
      <Annotation>大功告成，收拾回家了，<Caret /></Annotation>
      <MoveHandle aria-label="移动">
        <svg width="54" height="54" viewBox="0 0 54 54"><circle cx="27" cy="27" r="27" fill="#f2e600" /><path d="M27 11v32M11 27h32" stroke="#fafafa" strokeWidth="4" /><path d="M27 6l8 9H19zM27 48l8-9H19zM6 27l9-8v16zM48 27l-9-8v16z" fill="#fafafa" /></svg>
      </MoveHandle>
      <Pointer width="15" height="26" viewBox="0 0 15 26" fill="none" stroke="#000" strokeWidth="2"><path d="M1 1h5l1.500 1L9 1h5M1 25h5l1.500-1L9 25h5M7.500 2v22" /></Pointer>
    </Page>
  </Workspace>
);

const line = { fill: "#fdfdfd", stroke: "#1c1c1c", strokeWidth: 1.6, strokeLinejoin: "round" as const };

const PenPalette = () => (
  <Palette>
    <button aria-label="画笔">
      <svg width="51" height="51" viewBox="0 0 51 51"><circle cx="25.500" cy="25.500" r="25.500" fill="#000" /><path d="M17 8h18l5 16c-5 5-8 12-9 21H21c-1-9-4-16-10-21z" fill="#f6f6f6" /><circle cx="25.500" cy="23" r="5.500" fill="#000" /><path d="M25.500 26v19" stroke="#000" strokeWidth="2.500" /></svg>
    </button>
    <PaletteBox>
      <PenTool $on aria-label="显示"><svg width="36" height="26" viewBox="0 0 36 26"><path d="M1 13C8 3 13 2 18 2s10 1 17 11c-7 9-12 10-17 10S8 22 1 13z" {...line} /><circle cx="18" cy="12" r="9.500" {...line} /><circle cx="18" cy="11.500" r="6.500" fill="#151515" /></svg></PenTool>
      <PenTool aria-label="选择"><svg width="36" height="36" viewBox="0 0 36 36"><path d="M1 2l34 9v3l-13 2 13 12c1 3-3 7-6 5L17 21l-4 12z" {...line} /></svg></PenTool>
      <PenTool $on $more aria-label="文字"><svg width="32" height="34" viewBox="0 0 32 34"><path d="M3 30L12 3h8l9 27h-6l-2-7H11l-2 7zM13 18h6L16 8z" {...line} stroke="#000" strokeWidth="2" fillRule="evenodd" /></svg></PenTool>
      <PenTool $more aria-label="直线"><svg width="34" height="34" viewBox="0 0 34 34"><path d="M2 5c-1-3 1-4 3-3l27 26c1 2-1 4-3 3z" {...line} /></svg></PenTool>
      <PenTool aria-label="橡皮"><svg width="40" height="38" viewBox="0 0 40 38" {...line}><path d="M1 13L13 1l6 5L7 18z" /><path d="M7 18L19 6l18 15-11 13z" fill="#dcdcdc" /><path d="M26 34l11-12 1 3-11 12zM7 18l-6-5M7 14l20 18M11 4l5 6" /></svg></PenTool>
      <PenTool aria-label="粗细"><svg width="22" height="22"><circle cx="11" cy="11" r="11" fill="#151515" /></svg></PenTool>
      <PenTool aria-label="撤消"><svg width="36" height="32" viewBox="0 0 36 32"><path d="M1 11L14 1v6h10c13 0 14 23-5 22v-7c9 1 9-7 4-7h-9v5z" {...line} /></svg></PenTool>
      <PenTool aria-label="清空"><svg width="30" height="34" viewBox="0 0 30 34" {...line}><path d="M10 2h8v4h-8zM4 11h22v18H4z" /><path d="M5 5h20l3 7H2z" fill="#e4e4e4" /><path d="M4 29h22v3H4z" /><path d="M4 12h6v17H4zM20 12h6v17h-6z" fill="#d6d6d6" /></svg></PenTool>
      <PenTool $more aria-label="白板"><svg width="30" height="36" viewBox="0 0 30 36" {...line}><path d="M11 2h8v4h-8zM7 27h16v3H7zM9 30l-2 4h3l3-4zM21 30l2 4h-3l-3-4z" /><rect x="1" y="5" width="28" height="22" rx="3" /><path d="M5 9h20v14H5z" fill="#d0d0d0" /></svg></PenTool>
      <PenTool aria-label="截图"><svg width="34" height="30" viewBox="0 0 34 30" {...line}><path d="M1 6h9V2h13v4h10v21H1z" /><path d="M13 4h7v2h-7z" fill="#1c1c1c" /><circle cx="13" cy="16" r="8" /><circle cx="13" cy="16" r="5" fill="#1c1c1c" /><circle cx="27" cy="12" r="2.500" /><circle cx="15" cy="14" r="1" /></svg></PenTool>
      <PenTool aria-label="剪贴板"><svg width="28" height="34" viewBox="0 0 28 34" {...line}><rect x="1" y="6" width="26" height="27" rx="2" /><path d="M6 7c0-2 4-1 5-5h6c1 4 5 3 5 5zM5 13h18M5 19h18M5 25h18" /></svg></PenTool>
      <Swatches>
        <Swatch $c="#0aa0e0" aria-label="青" /><Swatch $c="#f2e600" aria-label="黄" />
        <Swatch $c="#f0037f" aria-label="品红" /><Swatch $c="#000" aria-label="黑" />
        <Swatch $wide $c="#f2e600" aria-label="当前颜色" />
      </Swatches>
    </PaletteBox>
  </Palette>
);

const Status = () => (
  <StatusBar>
    <StatusLeft>
      <span>第 1 页，共 1 页</span>
      <span>66 个字</span>
      <svg width="21" height="20" viewBox="0 0 21 20" fill="none" stroke="#777"><path d="M10 2.500H.5v14h7l2.500 2 2.500-2h7M10 2v16M10 2.500l2-2h8V5" /><path d="M12 9l3 3 6-7" stroke="#555" strokeWidth="2.500" /></svg>
      <span>中文(中国)</span>
    </StatusLeft>
    <StatusRight>
      <ViewButton aria-label="阅读视图"><svg width="20" height="19" viewBox="0 0 20 19" fill="none" stroke="#555"><path d="M10 2.500L8 1H.5v15H8l2 2 2-2h7.500V1H12zM10 2v16M2 5h6M2 8h6M2 11h6M12 5h6M12 8h6M12 11h6" /></svg></ViewButton>
      <ViewButton $on aria-label="页面视图" aria-pressed="true"><svg width="20" height="19" viewBox="0 0 20 19" fill="none" stroke="#555"><path d="M.5.5h19v18H.5zM3 4.500h14M3 7.500h14M3 10.500h14M3 13.500h11" /></svg></ViewButton>
      <ViewButton aria-label="Web 视图"><svg width="20" height="19" viewBox="0 0 20 19" fill="none" stroke="#555"><path d="M17.500 8V.5H.5v16H8M3 4.500h12M3 7.500h8M3 10.500h5" /><circle cx="14" cy="13" r="5" fill="#666" /><path d="M11 12l3 1 1 4" stroke="#e8e8e8" /></svg></ViewButton>
      <Step aria-label="缩小"><svg width="12" height="1"><path d="M0 .5h12" stroke="#333" /></svg></Step>
      <Zoom type="range" min="0" max="100" defaultValue="49" aria-label="缩放" />
      <Step aria-label="放大"><svg width="12" height="12"><path d="M0 6h12M6 0v12" stroke="#333" /></svg></Step>
      <Percent>100%</Percent>
    </StatusRight>
  </StatusBar>
);

const Tasks = () => (
  <TaskBar>
    <TaskButton $w={72} aria-label="开始"><svg width="24" height="25" viewBox="0 0 24 25"><path d="M0 3l10-1v10H0zM11 2l13-2v12H11zM0 13h10v10L0 21zM11 13h13v12l-13-2z" /></svg></TaskButton>
    <TaskButton $w={74} aria-label="任务视图"><svg width="25" height="24" viewBox="0 0 25 24" fill="none" stroke="#111" strokeWidth="1.500"><path d="M1 0v3h15V0M1 24v-3h15v3M1 6.500h15v11H1zM23 0v6M23 12v12" /><path d="M21 7h4v4h-4z" fill="#111" stroke="none" /></svg></TaskButton>
    <TaskButton aria-label="影音">
      <svg width="34" height="38" viewBox="0 0 34 36"><path d="M0 35V18a17 17.500 0 1 1 17 17z" fill="#0d8bfa" /><circle cx="17" cy="18" r="14" fill="#06154f" /><g fill="#19c4f2"><circle cx="13" cy="12" r="3" /><circle cx="21" cy="12" r="3" /><circle cx="10.500" cy="20" r="3" /><circle cx="23.500" cy="20" r="3" /><circle cx="17" cy="25" r="3" /><circle cx="17" cy="18" r="2" /></g><path d="M3 32l1-4 3 3z" fill="#06154f" /></svg>
    </TaskButton>
    <TaskButton aria-label="音乐">
      <svg width="36" height="36" viewBox="0 0 36 36"><circle cx="18" cy="18" r="18" fill="#fbd305" /><path d="M12 6c6 1 11-1 16-5-2 7-6 9-9 9l5 13a8 7.500 0 1 1-8-3z" fill="#10a956" /></svg>
    </TaskButton>
    <TaskButton $open aria-label="浏览器">
      <svg width="36" height="36" viewBox="0 0 36 36">
        <defs>
          <linearGradient id="edgeTop" x1="0" x2="1" y1="0" y2=".5"><stop offset="0" stopColor="#1e8fdc" /><stop offset=".5" stopColor="#2bb8c8" /><stop offset="1" stopColor="#63e04c" /></linearGradient>
          <linearGradient id="edgeLow" x1="0" x2="1" y1="0" y2="1"><stop offset="0" stopColor="#1590dc" /><stop offset="1" stopColor="#0a4a93" /></linearGradient>
        </defs>
        <path d="M1 15C3 5 10 0 18 0c11 0 18 8 18 15 0 7-5 9-9 9-3 0-6-1-6-2s2-2 2-5c0-4-4-7-9-7C8 10 3 11 1 15z" fill="url(#edgeTop)" />
        <path d="M0 18c0-5 5-8 11-8 7 0 11 3 12 7-1-1-3-2-5-1-4 2-3 12 7 13 4 0 7-1 8-2-3 6-9 9-15 9C8 36 0 28 0 18z" fill="url(#edgeLow)" />
      </svg>
    </TaskButton>
    <TaskButton $open aria-label="Word">
      <svg width="36" height="34" viewBox="0 0 36 34"><path d="M9 0h27v9H9z" fill="#3a9ae6" /><path d="M9 9h27v8H9z" fill="#2072d0" /><path d="M9 17h27v8H9z" fill="#1553b5" /><path d="M9 25h27v9H9z" fill="#0d3480" /><path d="M0 8h18v18H0z" fill="#1450b0" /><path d="M3 12l3 10 3-9 3 9 3-10" fill="none" stroke="#fff" strokeWidth="2" /></svg>
    </TaskButton>
    <TaskButton $open aria-label="录制">
      <svg width="36" height="36" viewBox="0 0 36 36"><defs><radialGradient id="rec" cx=".25" cy=".25" r=".9"><stop offset="0" stopColor="#cfc6c6" /><stop offset=".3" stopColor="#6c5d5d" /><stop offset="1" stopColor="#473c3c" /></radialGradient></defs><path d="M0 0h36v36H0z" fill="#171313" /><path d="M0 4h36v29H0z" fill="url(#rec)" /><path d="M5 27L10 9h5l2 9 6-9h6l-4 18h-5l2-10-6 9h-3l-2-9-2 10z" fill="#a80b0b" /></svg>
    </TaskButton>
    <TaskButton $open aria-label="文件资源管理器">
      <svg width="32" height="28" viewBox="0 0 32 28"><path d="M0 2c0-1 1-2 2-2h10l3 3v5H0z" fill="#d0920d" /><path d="M0 6h12l3-3h15c1 0 2 1 2 2v21H0z" fill="#f8d265" /><path d="M5 28V17c0-2 1-3 3-3h16c2 0 3 1 3 3v11h-6v-7H11v7z" fill="#3a8fd8" /></svg>
    </TaskButton>
    <Tray>
      <TrayButton aria-label="显示隐藏的图标"><svg width="18" height="10"><path d="M1 9l8-8 8 8" fill="none" stroke="#111" strokeWidth="1.500" /></svg></TrayButton>
      <TrayButton aria-label="安全"><svg width="24" height="24" viewBox="0 0 24 24"><path d="M0 3c8-4 16-4 24 0 0 11-4 18-12 21C4 21 0 14 0 3z" fill="#1b6ee6" /><path d="M3 5c6-3 12-3 18 0l-9 6z" fill="#eef4ff" /><path d="M3 8l8 5v8C6 18 4 14 3 8zM21 8l-8 5v8c5-3 7-7 8-13z" fill="#eef4ff" /><circle cx="17" cy="17" r="7" fill="#18d015" /><path d="M13 17h8" stroke="#fff" strokeWidth="2" /></svg></TrayButton>
      <TrayButton aria-label="电池"><svg width="24" height="18" viewBox="0 0 24 18" fill="none" stroke="#111"><path d="M5 15.500v-3M8 4.500h14v11H5M23.500 8v4M2 0v3M5 0v3M.5 3.500h6v3c0 3-6 3-6 0zM3.500 9v6.500H6" /><path d="M6 7h7v7H6z" fill="#111" /></svg></TrayButton>
      <TrayButton aria-label="网络"><svg width="20" height="20" viewBox="0 0 20 20" fill="none" stroke="#222" strokeWidth="1.300"><path d="M1 19C1 9 9 2 18 2" stroke="#888" /><path d="M5 19c0-7 6-13 13-13M9 19c0-5 4-9 9-9M13 19c0-3 2-5 5-5" /><circle cx="17" cy="18" r="1.500" fill="#222" stroke="none" /></svg></TrayButton>
      <TrayButton aria-label="音量"><svg width="22" height="20" viewBox="0 0 22 20" fill="none" stroke="#222" strokeWidth="1.300"><path d="M1 7h3l5-5v16l-5-5H1zM12 7c2 2 2 4 0 6M15 5c3 3 3 7 0 10" /><path d="M18 3c4 4 4 10 0 14" stroke="#888" /></svg></TrayButton>
      <TrayButton aria-label="输入法"><svg width="20" height="24" viewBox="0 0 20 24" fill="none" stroke="#555"><path d="M8 0h4v6h7v9h-7v9H8v-9H1V6h7zM4 9h4v3H4zM12 9h4v3h-4z" strokeWidth="1.500" /></svg></TrayButton>
      <TrayButton $w={50} aria-label="电脑管家"><svg width="24" height="24" viewBox="0 0 24 24"><rect width="24" height="24" rx="4" fill="#1e78f0" /><circle cx="12" cy="11.500" r="5.500" fill="none" stroke="#fff" strokeWidth="2.500" /><path d="M14 15l3 4" stroke="#fff" strokeWidth="2.500" /><circle cx="19" cy="19" r="2" fill="#5fe05c" /></svg></TrayButton>
      <Clock dateTime="2021-01-17T21:33">{"21:33\n2021/1/17"}</Clock>
      <TrayButton $w={48} aria-label="输入工具"><svg width="28" height="23" viewBox="0 0 28 23"><path d="M0 0l3 2v21H0zM28 0l-3 2v21h3zM6 4l8 10 8-10v19h-4V14l-4 6-4-6v9H6z" /></svg></TrayButton>
      <TrayButton $w={82} aria-label="通知"><svg width="25" height="25" viewBox="0 0 25 25" fill="none" stroke="#111" strokeWidth="1.400"><path d="M13 20l-2 3-4-4H1V1h23v12" /><path d="M20 13c1 5-1 7-6 8 5 5 12 1 10-5-1-2-2-3-4-3z" /></svg></TrayButton>
    </Tray>
  </TaskBar>
);

const Brand = () => (
  <Watermark>
    <MarkRow>
      <MarkBai>Bai</MarkBai>
      <Paw width="112" height="126" viewBox="0 0 112 126">
        <g fill="#f6f6f6">
          <ellipse cx="16" cy="48" rx="14" ry="19" />
          <ellipse cx="43" cy="20" rx="13.500" ry="20" />
          <ellipse cx="78" cy="22" rx="14" ry="19" transform="rotate(10 78 22)" />
          <ellipse cx="99" cy="56" rx="14.500" ry="18.500" />
          <path d="M57 50c9 0 14 6 20 14 9 12 28 19 28 37 0 12-8 21-20 22-10 1-17-3-28-2-11 0-18 3-27 2-13-1-20-10-20-22 0-18 15-24 25-35 7-8 12-16 22-16z" />
        </g>
        <text x="24" y="111" fontFamily="Liberation Sans" fontWeight="700" fontSize="55" fill="#cfcfcf">du</text>
      </Paw>
      <MarkCn>经验</MarkCn>
    </MarkRow>
    <MarkUrl>jingyan.baidu.com</MarkUrl>
  </Watermark>
);

export default function App() {
  return (
    <Screen>
      <Global />
      <Title />
      <Tabs />
      <Ribbon>
        <Clipboard />
        <FontGroup />
        <ParagraphGroup />
        <StyleGroup />
        <EditGroup />
        <RibbonEnd>
          <button aria-label="折叠功能区"><svg width="16" height="10"><path d="M1 9l7-7 7 7" fill="none" stroke="#444" strokeWidth="1.500" /></svg></button>
        </RibbonEnd>
      </Ribbon>
      <Document />
      <Status />
      <Tasks />
      <PenPalette />
      <Brand />
    </Screen>
  );
}
